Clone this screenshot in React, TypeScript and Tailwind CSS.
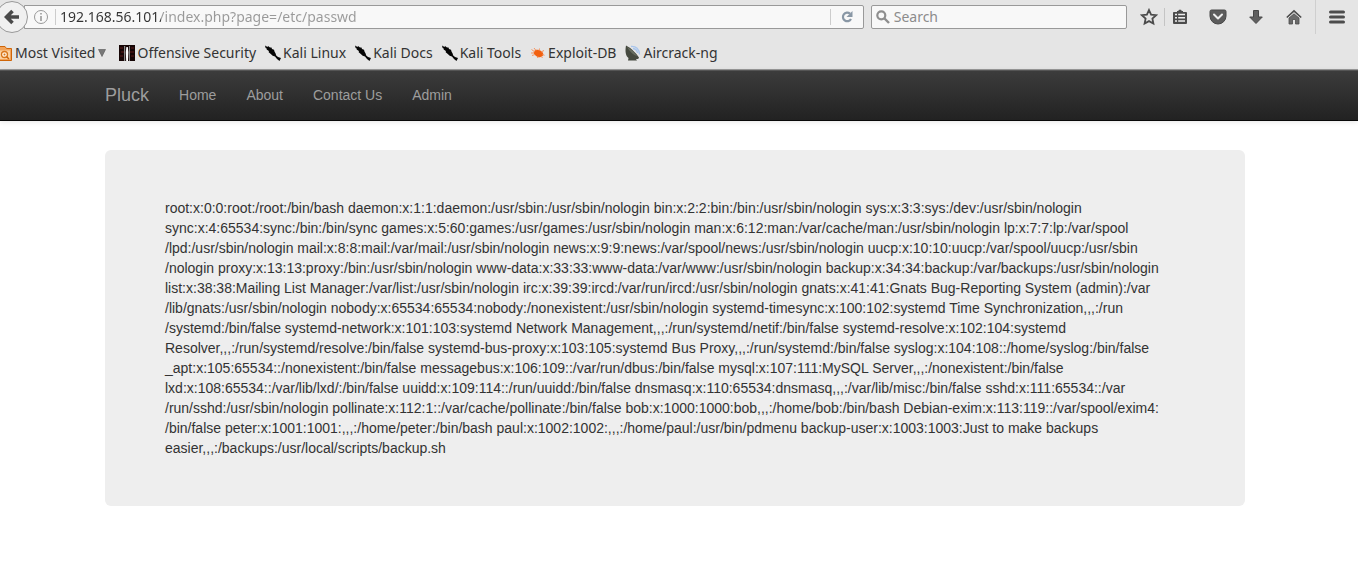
import type { ReactNode } from "react";

const passwdLines = [
  "root:x:0:0:root:/root:/bin/bash daemon:x:1:1:daemon:/usr/sbin:/usr/sbin/nologin bin:x:2:2:bin:/bin:/usr/sbin/nologin sys:x:3:3:sys:/dev:/usr/sbin/nologin",
  "sync:x:4:65534:sync:/bin:/bin/sync games:x:5:60:games:/usr/games:/usr/sbin/nologin man:x:6:12:man:/var/cache/man:/usr/sbin/nologin lp:x:7:7:lp:/var/spool",
  "/lpd:/usr/sbin/nologin mail:x:8:8:mail:/var/mail:/usr/sbin/nologin news:x:9:9:news:/var/spool/news:/usr/sbin/nologin uucp:x:10:10:uucp:/var/spool/uucp:/usr/sbin",
  "/nologin proxy:x:13:13:proxy:/bin:/usr/sbin/nologin www-data:x:33:33:www-data:/var/www:/usr/sbin/nologin backup:x:34:34:backup:/var/backups:/usr/sbin/nologin",
  "list:x:38:38:Mailing List Manager:/var/list:/usr/sbin/nologin irc:x:39:39:ircd:/var/run/ircd:/usr/sbin/nologin gnats:x:41:41:Gnats Bug-Reporting System (admin):/var",
  "/lib/gnats:/usr/sbin/nologin nobody:x:65534:65534:nobody:/nonexistent:/usr/sbin/nologin systemd-timesync:x:100:102:systemd Time Synchronization,,,:/run",
  "/systemd:/bin/false systemd-network:x:101:103:systemd Network Management,,,:/run/systemd/netif:/bin/false systemd-resolve:x:102:104:systemd",
  "Resolver,,,:/run/systemd/resolve:/bin/false systemd-bus-proxy:x:103:105:systemd Bus Proxy,,,:/run/systemd:/bin/false syslog:x:104:108::/home/syslog:/bin/false",
  "_apt:x:105:65534::/nonexistent:/bin/false messagebus:x:106:109::/var/run/dbus:/bin/false mysql:x:107:111:MySQL Server,,,:/nonexistent:/bin/false",
  "lxd:x:108:65534::/var/lib/lxd/:/bin/false uuidd:x:109:114::/run/uuidd:/bin/false dnsmasq:x:110:65534:dnsmasq,,,:/var/lib/misc:/bin/false sshd:x:111:65534::/var",
  "/run/sshd:/usr/sbin/nologin pollinate:x:112:1::/var/cache/pollinate:/bin/false bob:x:1000:1000:bob,,,:/home/bob:/bin/bash Debian-exim:x:113:119::/var/spool/exim4:",
  "/bin/false peter:x:1001:1001:,,,:/home/peter:/bin/bash paul:x:1002:1002:,,,:/home/paul:/usr/bin/pdmenu backup-user:x:1003:1003:Just to make backups",
  "easier,,,:/backups:/usr/local/scripts/backup.sh",
];

function FolderIcon() {
  return (
    <svg width="12" height="16" viewBox="4 0 12 16" aria-hidden="true">
      <path d="M0 1.500h9l1.500 2h5v12H0z" fill="#f3a45a" stroke="#cf6508" />
      <path d="M2 5.500h12v8.500H2z" fill="#fbd2a0" />
      <circle cx="8.500" cy="9.500" r="3" fill="#fff3e0" stroke="#d9761b" strokeWidth="1.300" />
      <circle cx="8.500" cy="9.500" r="1" fill="#d9761b" />
      <path d="M10.500 11.500l2.500 2.500" stroke="#cf6508" strokeWidth="1.500" />
    </svg>
  );
}

function OffsecIcon() {
  return (
    <svg width="16" height="16" viewBox="0 0 16 16" aria-hidden="true">
      <path d="M0 0h16v16H0z" fill="#160606" />
      <path d="M1 3h3M2 7h3M1 11h3M12 3h3M11 7h4M12 11h3" stroke="#451414" strokeWidth="1.500" />
      <path d="M5 1h1.200v15H5zM10 1h1v15h-1z" fill="#8a8a8a" />
      <path d="M7.400 2h1.400l.6 5-.4 9H7.200L6.800 7z" fill="#fff" />
    </svg>
  );
}

function KnifeIcon() {
  return (
    <svg width="16" height="16" viewBox="0 0 16 16" aria-hidden="true">
      <path
        d="M0 .5l2.500 1.500L3 1l2 1.500 1.500 0 .5 1.500 2 .8.6 2 1 1.700.6 2 1.800 1.500 3 1-1.500 3-2.500-2-2-2.500-2.300-.8-1.900-1.700L3.700 7.200l.2-1.200-2.300-1.500.3-.8L.6 3z"
        fill="#050505"
      />
    </svg>
  );
}

function BugIcon() {
  return (
    <svg width="16" height="16" viewBox="0 0 16 16" aria-hidden="true">
      <ellipse cx="8.500" cy="8.400" rx="5" ry="3.500" transform="rotate(22 8.500 8.400)" fill="#f2600f" />
      <path
        d="M5 7L1.500 4.500M6 5.500L4 3M9 5.500L9.500 3.500M11 7l3-1.500M12.500 9.500l2 .8M11 11l1.500 2M8 11.500L7.500 13M5 9.500L2 10.500M4 8L1 8"
        stroke="#f5935f"
      />
    </svg>
  );
}

function DishIcon() {
  return (
    <svg width="16" height="16" viewBox="0 0 16 16" aria-hidden="true">
      <path d="M6 1.500Q14 1 14.500 9.500M8 3.500Q12 4 12.500 8" fill="none" stroke="#a9c6ee" strokeWidth="1.300" />
      <path d="M1 .5C0 6 .5 11 3.500 13L3 15.500h9L11 14c2 .3 2.500-.3 3-1.500Q8 4 1 .5Z" fill="#45493f" />
      <path d="M2 2Q8 5 12.500 11.500Q6 9 2 2Z" fill="#676d60" />
    </svg>
  );
}

function Bookmark({ icon, label, className = "" }: { icon: ReactNode; label: string; className?: string }) {
  return (
    <a href="#" className={`flex items-center gap-0.5 whitespace-nowrap ${className}`}>
      {icon}
      {label}
    </a>
  );
}

function ToolButton({ label, className = "", children }: { label: string; className?: string; children: ReactNode }) {
  return (
    <button type="button" aria-label={label} className={`flex h-8 shrink-0 items-center justify-center ${className}`}>
      {children}
    </button>
  );
}

function BrowserChrome() {
  return (
    <header className="border-b border-[#999] bg-[#e5e5e5] font-['Noto_Sans','Open_Sans',sans-serif] text-sm text-[#333]">
      <div className="flex h-[34px] items-center pr-[9px]">
        <div className="flex h-8 w-7 shrink-0 items-center justify-end">
          <button
            type="button"
            aria-label="Back"
            className="z-10 flex size-8 shrink-0 items-center justify-center rounded-full border border-[#999] bg-[#f0f0f0]"
          >
            <svg width="16" height="16" viewBox="0 0 16 16" aria-hidden="true">
              <path d="M8.500 2L2.500 8l6 6M3 8h12" fill="none" stroke="#4a4a4a" strokeWidth="3.600" />
            </svg>
          </button>
        </div>
        <div className="-ml-1 flex h-6 min-w-0 flex-1 items-center rounded-r-xs border border-[#999] bg-[#f8f8f8] pl-2">
          <svg width="16" height="16" viewBox="0 0 16 16" className="shrink-0" aria-hidden="true">
            <circle cx="8" cy="8" r="6.500" fill="none" stroke="#999" />
            <path d="M7.200 4h1.600v1.600H7.200zM7.200 7h1.600v5H7.200z" fill="#999" />
          </svg>
          <span className="ml-1.5 h-4 w-px shrink-0 bg-[#ccc]" />
          <input
            type="text"
            aria-label="Address"
            defaultValue="192.168.56.101/index.php?page=/etc/passwd"
            className="ml-1 min-w-0 flex-1 bg-[linear-gradient(90deg,#333_101px,#999_101px)] bg-clip-text text-transparent outline-none"
          />
          <span className="h-4 w-px bg-[#ccc]" />
          <button type="button" aria-label="Reload" className="flex w-8 items-center justify-center">
            <svg width="14" height="14" viewBox="0 0 14 14" aria-hidden="true">
              <path d="M10 3.600A4.300 4.300 0 1 0 11 9" fill="none" stroke="#8997a5" strokeWidth="2.200" />
              <path d="M12.500 1v6h-6z" fill="#8997a5" />
            </svg>
          </button>
        </div>
        <label className="ml-[7px] flex h-6 w-[19%] shrink-0 items-center gap-1 rounded-xs border border-[#999] bg-[#f8f8f8] px-1">
          <svg width="14" height="14" viewBox="0 0 14 14" className="shrink-0" aria-hidden="true">
            <circle cx="5.300" cy="5.300" r="4" fill="none" stroke="#8e8e8e" strokeWidth="2.200" />
            <path d="M8.500 8.500l4.500 4.500" stroke="#8e8e8e" strokeWidth="2.400" />
          </svg>
          <input
            type="search"
            aria-label="Search"
            placeholder="Search"
            className="min-w-0 flex-1 outline-none placeholder:text-[#8c8c8c]"
          />
        </label>
        <ToolButton label="Bookmark this page" className="ml-2.5 w-6">
          <svg width="18" height="18" viewBox="0 0 18 18" aria-hidden="true">
            <path
              d="M9 2l2.100 4.600 5 .6-3.700 3.400 1 5L9 13.100l-4.400 2.500 1-5L1.900 7.200l5-.6z"
              fill="none"
              stroke="#4c4c4c"
              strokeWidth="1.800"
            />
          </svg>
        </ToolButton>
        <span className="ml-[3px] h-[18px] w-px bg-[#c4c4c4]" />
        <ToolButton label="Show your bookmarks" className="ml-[3px] w-6">
          <svg width="16" height="16" viewBox="0 0 16 16" aria-hidden="true">
            <path d="M1 3.500Q1 3 2 3h3V2h1.200L7 .8h2L9.800 2H11v1h3q1 0 1 .8V14q0 1-1 1H2q-1 0-1-1z" fill="#4c4c4c" />
            <path d="M3 5.500h2M6.200 5.500H13M3 8.800h2M6.200 8.800H13M3 12h2M6.200 12H13" stroke="#eee" strokeWidth="1.600" />
          </svg>
        </ToolButton>
        <ToolButton label="Save to Pocket" className="ml-3.5 w-6">
          <svg width="18" height="16" viewBox="0 0 18 16" aria-hidden="true">
            <path d="M2.500 1h13Q17 1 17 2.500V7a8 8 0 0 1-16 0V2.500Q1 1 2.500 1z" fill="#5c5c5c" stroke="#484848" />
            <path d="M5 5.500l4 4 4-4" fill="none" stroke="#eee" strokeWidth="2" strokeLinecap="round" strokeLinejoin="round" />
          </svg>
        </ToolButton>
        <ToolButton label="Downloads" className="ml-3.5 w-6">
          <svg width="16" height="16" viewBox="0 0 16 16" aria-hidden="true">
            <path d="M5.500 1.500h5V8h3.800L8 14.500 1.700 8h3.800z" fill="#606060" stroke="#484848" />
          </svg>
        </ToolButton>
        <ToolButton label="Home page" className="ml-3.5 w-6">
          <svg width="16" height="16" viewBox="0 0 16 16" aria-hidden="true">
            <path d="M.8 8.500L8 1.800l7.200 6.700" fill="none" stroke="#4c4c4c" strokeWidth="1.700" />
            <path d="M3 9l5-4.200L13 9v6H9.500v-4.500h-3V15H3z" fill="#6a6a6a" stroke="#4c4c4c" strokeWidth=".8" />
          </svg>
        </ToolButton>
        <span className="ml-[9px] h-full w-px bg-[#cfcfcf]" />
        <ToolButton label="Open menu" className="ml-[9px] w-6">
          <svg width="16" height="14" viewBox="0 0 16 14" aria-hidden="true">
            <path d="M1.500 2h13M1.500 7h13M1.500 12h13" stroke="#4c4c4c" strokeWidth="3" strokeLinecap="round" />
          </svg>
        </ToolButton>
      </div>
      <nav aria-label="Bookmarks" className="flex h-[35px] items-center pt-[3px]">
        <button type="button" className="flex items-center gap-[3px] whitespace-nowrap">
          <FolderIcon />
          Most Visited
          <svg width="8" height="8" viewBox="0 0 8 8" aria-hidden="true">
            <path d="M.5 .5h7L4 7.500z" fill="#777" stroke="#555" strokeWidth=".6" />
          </svg>
        </button>
        <Bookmark className="ml-[13px]" icon={<OffsecIcon />} label="Offensive Security" />
        <Bookmark className="ml-[9px]" icon={<KnifeIcon />} label="Kali Linux" />
        <Bookmark className="ml-[9px]" icon={<KnifeIcon />} label="Kali Docs" />
        <Bookmark className="ml-[9px]" icon={<KnifeIcon />} label="Kali Tools" />
        <Bookmark className="ml-[9px]" icon={<BugIcon />} label="Exploit-DB" />
        <Bookmark className="ml-[9px]" icon={<DishIcon />} label="Aircrack-ng" />
      </nav>
    </header>
  );
}

export default function App() {
  return (
    <div className="min-h-screen bg-white">
      <BrowserChrome />
      <div className="font-['Liberation_Sans',Arial,sans-serif] text-sm">
        <nav
          aria-label="Site"
          className="border-y border-t-[#555] border-b-[#080808] bg-linear-to-b from-[#3c3c3c] to-[#222] pr-2 shadow-[0_1px_5px_rgba(0,0,0,0.1)]"
        >
          <div className="mx-auto flex h-[49px] max-w-[1140px] items-center pb-0.5 text-[#9d9d9d]">
            <a href="#" className="mr-[15px] text-lg">
              Pluck
            </a>
            <a href="#" className="px-[15px]">
              Home
            </a>
            <a href="#" className="px-[15px]">
              About
            </a>
            <a href="#" className="px-[15px]">
              Contact Us
            </a>
            <a href="#" className="px-[15px]">
              Admin
            </a>
          </div>
        </nav>
        <main className="pt-[29px] pr-2">
          <div className="mx-auto max-w-[1140px] rounded-md bg-[#eee] px-[60px] py-12 leading-5 text-[#333]">
            {passwdLines.map((line) => (
              <p key={line} className="whitespace-nowrap">
                {line}
              </p>
            ))}
          </div>
        </main>
      </div>
    </div>
  );
}
